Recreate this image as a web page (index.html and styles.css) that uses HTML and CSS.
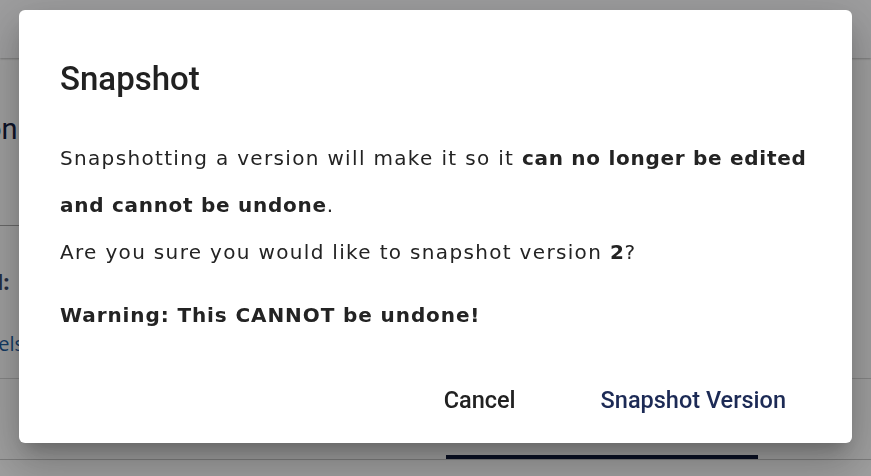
FILE: index.html
```html
<!DOCTYPE html>
<html lang="en">
<head>
<meta charset="utf-8">
<title>Snapshot</title>
<link rel="stylesheet" href="styles.css">
</head>
<body>
<div class="page">
  <header class="appbar"></header>
  <main class="content">
    <div class="title-row"><h1 class="page-title">Version</h1></div>
    <div class="section">
      <div class="field-label">Label:</div>
      <a class="field-link" href="#">Models</a>
    </div>
    <div class="tabs"><span class="tab tab-active"></span></div>
  </main>
</div>
<div class="backdrop">
  <div class="dialog" role="dialog" aria-labelledby="dlg-title">
    <h2 class="dialog-title" id="dlg-title">Snapshot</h2>
    <div class="dialog-body">
      <p class="para">Snapshotting a version will make it so it <strong>can no longer be edited and cannot be undone</strong>.<br>Are you sure you would like to snapshot version <strong>2</strong>?</p>
      <p class="para warning"><strong class="warn-text">Warning: This CANNOT be undone!</strong></p>
    </div>
    <div class="dialog-actions">
      <button class="btn btn-cancel">Cancel</button>
      <button class="btn btn-primary">Snapshot Version</button>
    </div>
  </div>
</div>
</body>
</html>
```

FILE: styles.css
```css
* { box-sizing: border-box; }
html, body { margin: 0; padding: 0; }
body {
  width: 871px;
  height: 476px;
  overflow: hidden;
  background: #ffffff;
  font-family: "DejaVu Sans", "Liberation Sans", sans-serif;
}
.page { width: 871px; height: 476px; }
.appbar {
  height: 58px;
  background: #fdfeff;
  box-shadow: 0 1px 2px rgba(0,0,0,0.25);
  position: relative;
}
.title-row {
  width: 420px;
  height: 168px;
  border-bottom: 1px solid #a8a8a8;
  padding-top: 54px;
  margin-left: -80px;
}
.page-title {
  margin: 0;
  font-family: "Roboto", sans-serif;
  font-weight: 400;
  font-size: 29px;
  line-height: 34px;
  color: #15203f;
}
.section {
  height: 153px;
  border-bottom: 1px solid #d6d6d6;
  padding-top: 40px;
}
.field-label {
  margin-left: -56px;
  font-family: "Open Sans", sans-serif;
  font-weight: 700;
  font-size: 22px;
  line-height: 30px;
  color: #3c4a6b;
}
.field-link {
  display: block;
  margin-top: 34px;
  margin-left: -44px;
  font-family: "Open Sans", sans-serif;
  font-size: 20px;
  line-height: 28px;
  color: #1f5fa3;
  text-decoration: none;
}
.tabs {
  height: 81px;
  border-bottom: 1px solid #c8c8c8;
  display: flex;
  align-items: flex-end;
  padding-left: 446px;
}
.tab-active {
  display: block;
  width: 312px;
  height: 4px;
  background: #101a3a;
}
.backdrop {
  position: fixed;
  inset: 0;
  z-index: 10;
  background: rgba(0,0,0,0.38);
  display: flex;
  justify-content: center;
  align-items: flex-start;
  padding-top: 10px;
}
.dialog {
  width: 833px;
  height: 433px;
  background: #ffffff;
  border-radius: 6px;
  box-shadow: 0 11px 15px -7px rgba(0,0,0,0.2), 0 24px 38px 3px rgba(0,0,0,0.14), 0 9px 46px 8px rgba(0,0,0,0.12);
  padding: 49px 26px 0 41px;
  display: flex;
  flex-direction: column;
}
.dialog-title {
  margin: 0;
  font-family: "Roboto", sans-serif;
  font-weight: 500;
  font-size: 33px;
  line-height: 40px;
  color: #212121;
}
.dialog-body {
  margin-top: 36px;
  color: #232323;
  font-size: 20px;
  letter-spacing: 1.33px;
}
.para { margin: 0; line-height: 47px; }
.para strong { font-weight: 700; letter-spacing: 0.72px; }
.para .warn-text { letter-spacing: 0.9px; }
.warning { margin-top: 16px; }
.dialog-actions {
  margin-top: auto;
  display: flex;
  justify-content: flex-end;
  gap: 35px;
  padding: 0 15px 17px 0;
}
.btn {
  border: none;
  background: transparent;
  font-family: "Roboto", sans-serif;
  font-weight: 500;
  font-size: 23.5px;
  line-height: 27px;
  padding: 12px 25px;
  cursor: pointer;
}
.btn-cancel { color: #212121; }
.btn-primary { color: #1c2a55; }
```
